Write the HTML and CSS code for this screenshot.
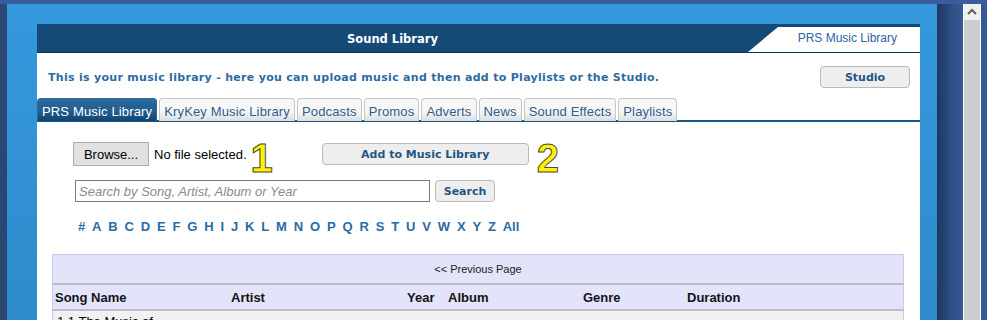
FILE: index.html
```html
<!DOCTYPE html>
<html lang="en">
<head>
    <meta charset="UTF-8">
    <title>Sound Library</title>
    <link rel="stylesheet" href="styles.css">
</head>
<body>
    <div class="topline"></div>
    <div class="screen">
        <div class="edge"></div>
        <div class="panel">
            <div class="box">
                <div class="header">
                    <div class="title">Sound Library</div>
                    <div class="header-tab">PRS Music Library</div>
                </div>

                <div class="intro">
                    <p>This is your music library - here you can upload music and then add to Playlists or the Studio.</p>
                    <button type="button" class="btn studio">Studio</button>
                </div>

                <ul class="tabs">
                    <li class="active">PRS Music Library</li>
                    <li>KryKey Music Library</li>
                    <li>Podcasts</li>
                    <li>Promos</li>
                    <li>Adverts</li>
                    <li>News</li>
                    <li>Sound Effects</li>
                    <li>Playlists</li>
                </ul>

                <div class="content">
                    <div class="upload">
                        <button type="button" class="browse">Browse...</button>
                        <span class="nofile">No file selected.</span>
                        <span class="step one">1</span>
                        <button type="button" class="btn add">Add to Music Library</button>
                        <span class="step two">2</span>
                    </div>

                    <div class="search">
                        <input type="text" placeholder="Search by Song, Artist, Album or Year">
                        <button type="button" class="btn">Search</button>
                    </div>

                    <div class="letters">
                        <a>#</a><a>A</a><a>B</a><a>C</a><a>D</a><a>E</a><a>F</a><a>G</a><a>H</a><a>I</a><a>J</a><a>K</a><a>L</a><a>M</a><a>N</a><a>O</a><a>P</a><a>Q</a><a>R</a><a>S</a><a>T</a><a>U</a><a>V</a><a>W</a><a>X</a><a>Y</a><a>Z</a><a>All</a>
                    </div>

                    <table class="songs">
                        <tr class="pager"><td colspan="6">&lt;&lt; Previous Page</td></tr>
                        <tr class="head">
                            <th class="c-song">Song Name</th>
                            <th class="c-artist">Artist</th>
                            <th class="c-year">Year</th>
                            <th class="c-album">Album</th>
                            <th class="c-genre">Genre</th>
                            <th class="c-dur">Duration</th>
                        </tr>
                        <tr class="row">
                            <td>1.1 The Music of</td><td></td><td></td><td></td><td></td><td></td>
                        </tr>
                    </table>
                </div>
            </div>
        </div>
        <div class="shadow"></div>
        <div class="scrollbar">
            <div class="arrow">
                <svg width="10" height="8" viewBox="0 0 10 8"><path d="M1 6 L5 2 L9 6" fill="none" stroke="#606060" stroke-width="2"/></svg>
            </div>
        </div>
    </div>
</body>
</html>
```

FILE: styles.css
```css
body {
    margin: 0;
    height: 320px;
    overflow: hidden;
    background-color: #355a93;
    font-family: "Liberation Sans", Arial, sans-serif;
}
.topline {
    height: 4px;
    background-color: #3a5c9c;
}
.screen {
    display: flex;
    height: 316px;
}
.edge {
    width: 7px;
    flex-shrink: 0;
    background-color: #2b4773;
}
.panel {
    width: 930px;
    flex-shrink: 0;
    box-sizing: border-box;
    padding: 20px 17px 0 30px;
    background: linear-gradient(#3598dd, #2f8bcb);
}
.box {
    background: #fff;
    height: 100%;
    overflow: hidden;
}

/* cabecalho */
.header {
    display: flex;
    height: 28px;
    background-color: #154a77;
    border-bottom: 1px solid #0e3658;
}
.title {
    flex: 1;
    text-align: center;
    color: #fff;
    font-family: "DejaVu Sans", Verdana, sans-serif;
    font-weight: bold;
    font-size: 11.5px;
    line-height: 30px;
}
.header-tab {
    width: 172px;
    box-sizing: border-box;
    margin-top: 3px;
    padding-right: 23px;
    background: #fff;
    clip-path: polygon(30px 0, 100% 0, 100% 100%, 0 100%);
    color: #2d63a8;
    font-size: 12px;
    line-height: 23px;
    text-align: right;
}

.intro {
    display: flex;
    align-items: center;
    justify-content: space-between;
    padding: 13px 10px 0 11px;
    height: 22px;
}
.intro p {
    margin: 0;
    color: #2e6aa4;
    font-family: "DejaVu Sans", Verdana, sans-serif;
    font-weight: bold;
    font-size: 11px;
    letter-spacing: 0.3px;
}
.btn {
    background-color: #eeeeee;
    border: 1px solid #bababa;
    border-radius: 4px;
    color: #1f5684;
    font-family: "DejaVu Sans", Verdana, sans-serif;
    font-weight: bold;
    font-size: 11px;
    cursor: pointer;
}
.studio {
    width: 90px;
    height: 22px;
}

/* abas */
.tabs {
    display: flex;
    list-style: none;
    margin: 10px 0 0 0;
    padding: 0;
    height: 22px;
    border-bottom: 2px solid #1a5585;
}
.tabs li {
    margin-right: 2px;
    padding: 0 4px;
    height: 22px;
    line-height: 25px;
    font-size: 13px;
    letter-spacing: 0.15px;
    color: #2b5f90;
    border: 1px solid #c6c6c6;
    border-bottom: none;
    border-radius: 4px 4px 0 0;
    background: linear-gradient(#f7f7f7 55%, #dddddd);
}
.tabs li.active {
    color: #fff;
    border-color: #2b6798;
    background: linear-gradient(#2b6a9c, #225e8e 55%, #0f4572);
}

.content {
    padding: 20px 17px 0 15px;
}
.upload {
    display: flex;
    align-items: center;
    height: 24px;
    margin-left: 21px;
}
.browse {
    width: 76px;
    height: 24px;
    background: #e1e1e1;
    border: 1px solid #adadad;
    font-family: "Liberation Sans", Arial, sans-serif;
    font-size: 13px;
    color: #000;
    padding: 0;
}
.nofile {
    margin-left: 5px;
    font-size: 13px;
}
.step {
    font-weight: bold;
    font-size: 40px;
    color: #fff200;
    -webkit-text-stroke: 1px #4a4a3a;
    line-height: 24px;
    position: relative;
    top: 4px;
}
.one {
    margin-left: 4px;
}
.add {
    width: 207px;
    height: 22px;
    margin-left: 49px;
}
.two {
    margin-left: 8px;
}
.search {
    display: flex;
    align-items: center;
    margin: 14px 0 0 23px;
}
.search input {
    width: 355px;
    height: 22px;
    box-sizing: border-box;
    border: 1px solid #7a7a7a;
    padding: 0 3px;
    font-family: "Liberation Sans", Arial, sans-serif;
    font-size: 13px;
}
.search input::placeholder {
    color: #8a8a8a;
    font-style: italic;
}
.search .btn {
    margin-left: 5px;
    width: 60px;
    height: 22px;
}
.letters {
    display: flex;
    gap: 6.85px;
    margin: 17px 0 0 26px;
    font-weight: bold;
    font-size: 13px;
    color: #2b6aa5;
}

/* tabela */
.songs {
    width: 852px;
    margin-top: 20px;
    border-collapse: collapse;
    background-color: #e3e3fa;
    border: 1px solid #c9c9ef;
    font-size: 13px;
}
.pager td {
    height: 28px;
    padding: 0;
    text-align: center;
    font-size: 11px;
    color: #222;
    border-bottom: 2px solid #bdbdc8;
}
.head th {
    height: 24px;
    padding: 0 2px;
    text-align: left;
    color: #141414;
    border-bottom: 2px solid #bdbdc8;
}
.c-song { width: 172px; }
.c-artist { width: 172px; }
.c-year { width: 37px; }
.c-album { width: 131px; }
.c-genre { width: 100px; }
.row td {
    background: #f1f1f1;
    height: 20px;
    padding: 0 4px;
    font-size: 13px;
}

.shadow {
    width: 26px;
    flex-shrink: 0;
    background: linear-gradient(to right, #1e3761, #2f5088 60%, #355a93);
}
.scrollbar {
    width: 16px;
    flex-shrink: 0;
    border-left: 1px solid #fff;
    border-right: 1px solid #fff;
    background-color: #cdcdcd;
}
.arrow {
    height: 16px;
    background-color: #f0f0f0;
    display: flex;
    align-items: center;
    justify-content: center;
}
```
